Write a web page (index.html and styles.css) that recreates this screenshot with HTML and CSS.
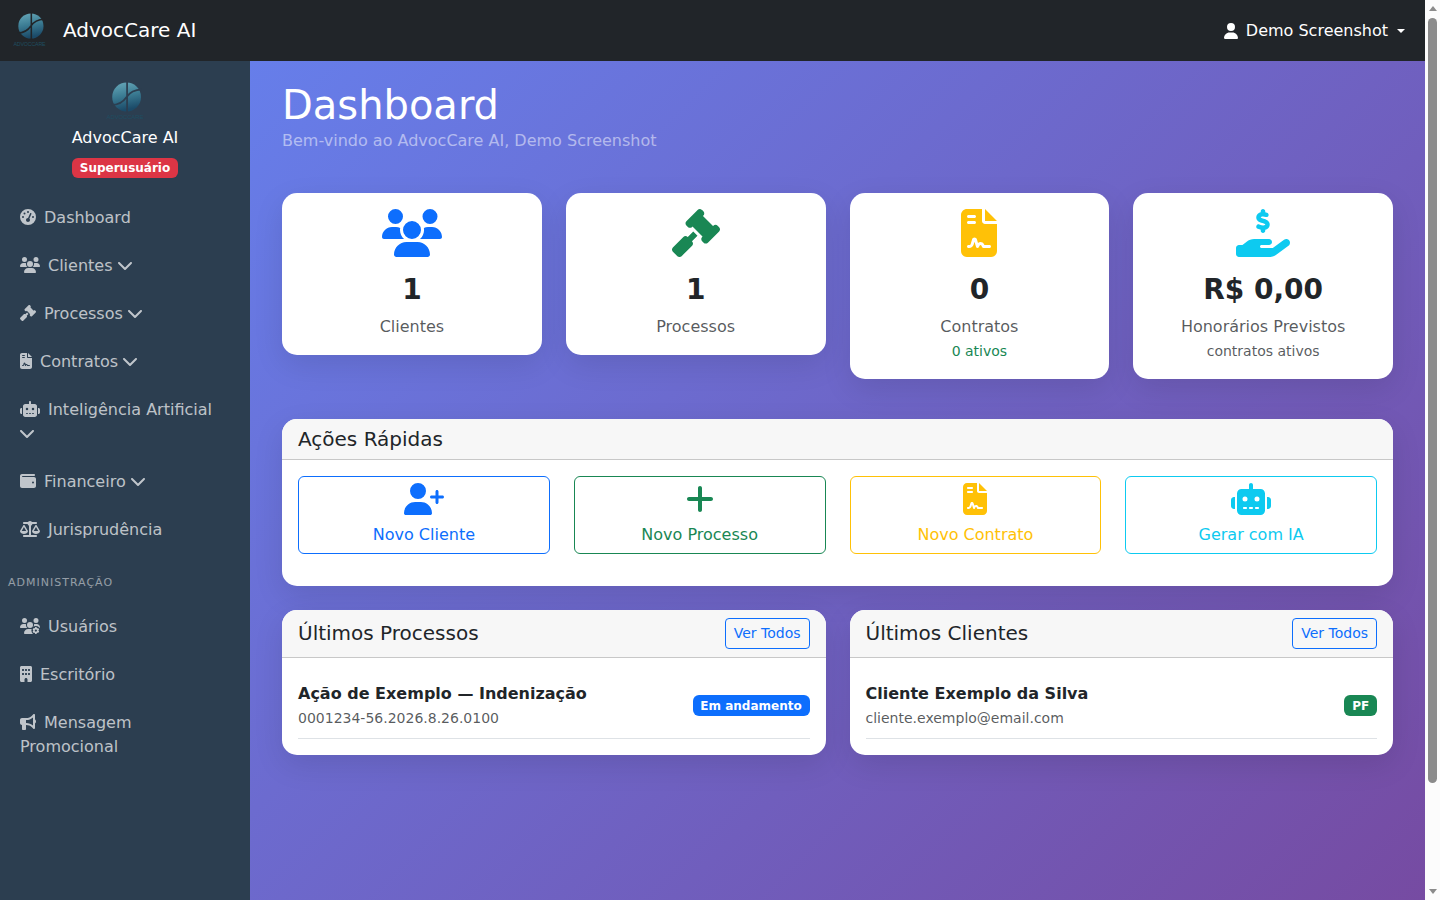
FILE: index.html
```html
<!DOCTYPE html>
<html lang="pt-BR">
<head>
  <meta charset="UTF-8">
  <meta name="viewport" content="width=device-width, initial-scale=1.0">
  <title>Dashboard - AdvocCare AI</title>
  <link rel="stylesheet" href="styles.css">
</head>
<body>
  <!-- Ícones -->
  <svg class="sprite" width="0" height="0" aria-hidden="true">
    <defs>
      <linearGradient id="logo-fill" x1="0" y1="0" x2="0.2" y2="1">
        <stop offset="0" stop-color="#68a9ba"/>
        <stop offset="0.5" stop-color="#3c7d94"/>
        <stop offset="1" stop-color="#1b4a68"/>
      </linearGradient>
      <g id="logo">
        <circle cx="27" cy="20" r="18" fill="url(#logo-fill)"/>
        <path class="logo-cut" d="M27.6 1V39M8 30C18 30 23 26 27 20C31 14 36 11 46 10.500"/>
        <text x="25" y="48" text-anchor="middle" textLength="46" class="logo-text">ADVOCCARE</text>
      </g>
      <path id="i-users" d="M144 0a80 80 0 1 1 0 160A80 80 0 1 1 144 0zM512 0a80 80 0 1 1 0 160A80 80 0 1 1 512 0zM0 298.700C0 239.800 47.800 192 106.700 192h42.700c15.900 0 31 3.500 44.600 9.700c-1.300 7.200-1.900 14.700-1.900 22.300c0 38.200 16.800 72.500 43.300 96H21.300C9.600 320 0 310.400 0 298.700zM405.300 320c26.600-23.500 43.300-57.800 43.300-96c0-7.600-.7-15-1.900-22.300c13.600-6.300 28.700-9.700 44.600-9.700h42.700C592.200 192 640 239.800 640 298.700c0 11.800-9.600 21.300-21.300 21.300H405.300zM224 224a96 96 0 1 1 192 0 96 96 0 1 1 -192 0zM128 485.300C128 411.700 187.700 352 261.300 352H378.700C452.300 352 512 411.700 512 485.300c0 14.700-11.900 26.700-26.700 26.700H154.700c-14.700 0-26.700-11.900-26.700-26.700z"/>
      <path id="i-gavel" d="M318.600 9.400c-12.500-12.500-32.800-12.500-45.300 0l-120 120c-12.500 12.500-12.500 32.800 0 45.300l16 16c12.500 12.500 32.800 12.500 45.300 0l4-4L325.400 293.400l-4 4c-12.500 12.500-12.500 32.800 0 45.300l16 16c12.500 12.500 32.800 12.500 45.300 0l120-120c12.500-12.500 12.500-32.800 0-45.300l-16-16c-12.500-12.500-32.800-12.500-45.300 0l-4 4L330.600 74.600l4-4c12.500-12.500 12.500-32.800 0-45.300l-16-16zm-152 288c-12.500-12.500-32.800-12.500-45.300 0l-112 112c-12.500 12.500-12.500 32.800 0 45.300l48 48c12.500 12.500 32.800 12.500 45.300 0l112-112c12.500-12.500 12.500-32.800 0-45.300l-1.400-1.400L272 285.300 226.700 240 168 298.700l-1.400-1.400z"/>
      <path id="i-contract" d="M64 0C28.700 0 0 28.700 0 64V448c0 35.300 28.700 64 64 64H320c35.300 0 64-28.700 64-64V160H256c-17.700 0-32-14.300-32-32V0H64zM256 0V128H384L256 0zM80 64h64c8.800 0 16 7.200 16 16s-7.200 16-16 16H80c-8.800 0-16-7.200-16-16s7.200-16 16-16zm0 64h64c8.800 0 16 7.200 16 16s-7.200 16-16 16H80c-8.800 0-16-7.200-16-16s7.200-16 16-16zm54.200 253.800c-6.100 20.300-24.800 34.200-46 34.200H80c-8.800 0-16-7.200-16-16s7.200-16 16-16h8.200c7.100 0 13.300-4.600 15.300-11.400l14.900-49.500c3.400-11.300 13.800-19.100 25.600-19.100s22.200 7.700 25.600 19.100l11.600 38.600c7.400-6.200 16.800-9.700 26.800-9.700c15.900 0 30.400 9 37.500 23.200l4.400 8.800H304c8.800 0 16 7.200 16 16s-7.200 16-16 16H240c-6.100 0-11.600-3.400-14.300-8.800l-8.800-17.700c-1.700-3.400-5.100-5.500-8.800-5.500s-7.200 2.100-8.800 5.500l-8.800 17.700c-2.900 5.900-9.200 9.400-15.700 8.800s-12.100-5.100-13.900-11.300L144 349l-9.800 32.800z"/>
      <path id="i-hand" d="M312 24V34.500c6.400 1.200 12.600 2.700 18.200 4.200c12.800 3.400 20.400 16.600 17 29.400s-16.600 20.400-29.400 17c-10.900-2.900-21.100-4.900-30.200-5c-7.300-.1-14.700 1.700-19.400 4.400c-2.100 1.300-3.100 2.400-3.500 3c-.3 .5-.7 1.200-.7 2.800c0 .3 0 .5 0 .6c.2 .2 .9 1.200 3.300 2.600c5.800 3.500 14.400 6.200 27.400 10.100l.9 .3c11.100 3.300 25.900 7.800 37.900 15.300c13.700 8.600 26.100 22.900 26.400 44.900c.3 22.500-11.400 38.900-26.700 48.500c-6.700 4.100-13.900 7-21.300 8.800V232c0 13.300-10.700 24-24 24s-24-10.700-24-24V220.600c-9.500-2.300-18.200-5.300-25.600-7.800c-2.100-.7-4.100-1.400-6-2c-12.600-4.200-19.400-17.800-15.200-30.400s17.800-19.400 30.400-15.200c2.600 .9 5 1.700 7.300 2.500c13.600 4.600 23.400 7.900 33.900 8.300c8 .3 15.100-1.600 19.200-4.100c1.900-1.200 2.800-2.200 3.200-2.900c.4-.6 .9-1.800 .8-4.100l0-.2c0-1 0-2.100-4-4.600c-5.700-3.600-14.300-6.400-27.100-10.300l-1.900-.6c-10.800-3.200-25-7.500-36.400-14.400c-13.500-8.100-26.500-22-26.600-44.100c-.1-22.900 12.900-38.600 27.700-47.400c6.400-3.800 13.300-6.400 20.200-8.200V24c0-13.300 10.700-24 24-24s24 10.700 24 24zM568.200 336.300c13.100 17.800 9.300 42.800-8.500 55.900L433.100 485.500c-23.400 17.200-51.600 26.500-80.700 26.500H192 32c-17.700 0-32-14.300-32-32V416c0-17.700 14.300-32 32-32H68.800l44.900-36c22.700-18.200 50.900-28 80-28H272h16 64c17.700 0 32 14.300 32 32s-14.300 32-32 32H288 272c-8.800 0-16 7.200-16 16s7.200 16 16 16H392.600l119.700-88.200c17.800-13.100 42.800-9.300 55.900 8.500z"/>
      <path id="i-user-plus" d="M96 128a128 128 0 1 1 256 0A128 128 0 1 1 96 128zM0 482.300C0 383.800 79.800 304 178.300 304h91.400C368.200 304 448 383.800 448 482.300c0 16.400-13.300 29.700-29.700 29.700H29.700C13.300 512 0 498.700 0 482.300zM504 312V248H440c-13.300 0-24-10.700-24-24s10.700-24 24-24h64V136c0-13.300 10.700-24 24-24s24 10.700 24 24v64h64c13.300 0 24 10.700 24 24s-10.700 24-24 24H552v64c0 13.300-10.700 24-24 24s-24-10.700-24-24z"/>
      <path id="i-plus" d="M256 80c0-17.700-14.300-32-32-32s-32 14.300-32 32V224H48c-17.700 0-32 14.300-32 32s14.300 32 32 32H192V432c0 17.700 14.300 32 32 32s32-14.300 32-32V288H400c17.700 0 32-14.300 32-32s-14.300-32-32-32H256V80z"/>
      <path id="i-robot" d="M320 0c17.700 0 32 14.300 32 32V96H472c39.800 0 72 32.200 72 72V440c0 39.800-32.200 72-72 72H168c-39.800 0-72-32.200-72-72V168c0-39.800 32.200-72 72-72H288V32c0-17.700 14.300-32 32-32zM208 384c-8.800 0-16 7.200-16 16s7.200 16 16 16h32c8.800 0 16-7.200 16-16s-7.200-16-16-16H208zm96 0c-8.800 0-16 7.200-16 16s7.200 16 16 16h32c8.800 0 16-7.200 16-16s-7.200-16-16-16H304zm96 0c-8.800 0-16 7.200-16 16s7.200 16 16 16h32c8.800 0 16-7.200 16-16s-7.200-16-16-16H400zM264 256a40 40 0 1 0 -80 0 40 40 0 1 0 80 0zm152 40a40 40 0 1 0 0-80 40 40 0 1 0 0 80zM48 224H64V416H48c-26.500 0-48-21.500-48-48V272c0-26.500 21.500-48 48-48zm544 0c26.500 0 48 21.500 48 48v96c0 26.500-21.500 48-48 48H576V224h16z"/>
      <path id="i-user" d="M224 256A128 128 0 1 0 224 0a128 128 0 1 0 0 256zm-45.700 48C79.800 304 0 383.800 0 482.300C0 498.700 13.300 512 29.700 512H418.300c16.400 0 29.700-13.300 29.700-29.700C448 383.800 368.200 304 269.700 304H178.300z"/>
      <path id="i-gauge" d="M0 256a256 256 0 1 1 512 0A256 256 0 1 1 0 256zM288 96a32 32 0 1 0 -64 0 32 32 0 1 0 64 0zM256 416c35.300 0 64-28.700 64-64c0-17.400-6.900-33.100-18.100-44.600L366 161.700c5.300-12.100-.2-26.300-12.300-31.600s-26.300 .2-31.600 12.300L257.900 288c-.6 0-1.300 0-1.900 0c-35.300 0-64 28.700-64 64s28.700 64 64 64zM176 144a32 32 0 1 0 -64 0 32 32 0 1 0 64 0zM96 288a32 32 0 1 0 0-64 32 32 0 1 0 0 64zm352-32a32 32 0 1 0 -64 0 32 32 0 1 0 64 0z"/>
      <path id="i-wallet" d="M64 32C28.700 32 0 60.700 0 96V416c0 35.300 28.700 64 64 64H448c35.300 0 64-28.700 64-64V192c0-35.300-28.700-64-64-64H80c-8.800 0-16-7.200-16-16s7.200-16 16-16H448c17.700 0 32-14.300 32-32s-14.300-32-32-32H64zM416 272a32 32 0 1 1 0 64 32 32 0 1 1 0-64z"/>
      <path id="i-scale" d="M384 32H512c17.700 0 32 14.300 32 32s-14.300 32-32 32H398.400c-5.200 25.800-22.900 47.100-46.400 57.300V448H512c17.700 0 32 14.300 32 32s-14.300 32-32 32H320 128c-17.700 0-32-14.300-32-32s14.300-32 32-32H288V153.300c-23.500-10.300-41.200-31.600-46.400-57.300H128c-17.700 0-32-14.300-32-32s14.300-32 32-32H256c14.600-19.400 37.800-32 64-32s49.400 12.600 64 32zm55.600 288H584.400L512 195.800 439.600 320zM512 416c-62.900 0-115.200-34-126-78.900c-2.600-11 1-22.300 6.700-32.100l95.200-163.200c5-8.600 14.200-13.800 24.100-13.800s19.100 5.300 24.100 13.800l95.200 163.200c5.700 9.800 9.300 21.100 6.700 32.100C627.200 382 574.900 416 512 416zM126.800 195.800L54.400 320H199.300L126.800 195.800zM.9 337.100c-2.600-11 1-22.300 6.700-32.100l95.200-163.200c5-8.600 14.200-13.800 24.100-13.800s19.100 5.300 24.100 13.800l95.200 163.200c5.700 9.800 9.300 21.100 6.700 32.100C242 382 189.700 416 126.800 416S11.700 382 .9 337.100z"/>
      <path id="i-building" d="M48 0C21.500 0 0 21.500 0 48V464c0 26.500 21.500 48 48 48h96V432c0-26.500 21.500-48 48-48s48 21.500 48 48v80h96c26.500 0 48-21.500 48-48V48c0-26.500-21.500-48-48-48H48zM64 240c0-8.800 7.200-16 16-16h32c8.800 0 16 7.200 16 16v32c0 8.800-7.200 16-16 16H80c-8.800 0-16-7.200-16-16V240zm112-16h32c8.800 0 16 7.200 16 16v32c0 8.800-7.200 16-16 16H176c-8.800 0-16-7.200-16-16V240c0-8.800 7.200-16 16-16zm80 16c0-8.800 7.200-16 16-16h32c8.800 0 16 7.200 16 16v32c0 8.800-7.200 16-16 16H272c-8.800 0-16-7.200-16-16V240zM80 96h32c8.800 0 16 7.200 16 16v32c0 8.800-7.200 16-16 16H80c-8.800 0-16-7.200-16-16V112c0-8.800 7.200-16 16-16zm80 16c0-8.800 7.200-16 16-16h32c8.800 0 16 7.200 16 16v32c0 8.800-7.200 16-16 16H176c-8.800 0-16-7.200-16-16V112zM272 96h32c8.800 0 16 7.200 16 16v32c0 8.800-7.200 16-16 16H272c-8.800 0-16-7.200-16-16V112c0-8.800 7.200-16 16-16z"/>
      <path id="i-bullhorn" d="M480 32c0-12.900-7.800-24.600-19.800-29.600s-25.700-2.200-34.900 6.900L381.700 53c-48 48-113.100 75-181 75H192 160 64c-35.300 0-64 28.700-64 64v96c0 35.300 28.700 64 64 64l0 128c0 17.700 14.300 32 32 32h64c17.700 0 32-14.300 32-32V352l8.700 0c67.900 0 133 27 181 75l43.600 43.600c9.200 9.200 22.900 11.900 34.900 6.900s19.800-16.600 19.800-29.600V300.400c18.600-8.800 32-32.500 32-60.400s-13.400-51.600-32-60.400V32zm-64 76.700V240 371.300C357.200 317.800 280.500 288 200.700 288H192V192h8.700c79.800 0 156.500-29.800 215.300-83.300z"/>
      <path id="i-chevron" d="M201.400 406.600c12.500 12.500 32.800 12.500 45.300 0l192-192c12.500-12.500 12.500-32.800 0-45.300s-32.800-12.500-45.300 0L224 338.700 54.600 169.400c-12.500-12.500-32.800-12.500-45.300 0s-12.500 32.800 0 45.300l192 192z"/>
      <g id="i-users-gear">
        <use href="#i-users"/>
        <circle cx="508" cy="400" r="142" class="gear-gap"/>
        <circle cx="508" cy="400" r="62" class="gear-ring"/>
        <path class="gear-teeth" d="M508 290V325M508 475V510M413 345L443 362M573 438L603 455M413 455L443 438M573 362L603 345"/>
      </g>
    </defs>
  </svg>

  <div class="page">
    <nav class="navbar">
      <a class="navbar-brand" href="#">
        <svg class="logo" viewBox="0 0 50 50"><use href="#logo"/></svg>
        AdvocCare AI
      </a>
      <a class="user-menu" href="#"><svg class="icon" viewBox="0 0 448 512"><use href="#i-user"/></svg>Demo Screenshot</a>
    </nav>

    <div class="layout">
      <aside class="sidebar">
        <div class="sidebar-header">
          <svg class="logo" viewBox="0 0 50 50"><use href="#logo"/></svg>
          <div class="office">AdvocCare AI</div>
          <span class="badge bg-danger">Superusuário</span>
        </div>
        <nav class="menu">
          <a href="#"><svg class="icon" viewBox="0 0 512 512"><use href="#i-gauge"/></svg>Dashboard</a>
          <a href="#"><svg class="icon" viewBox="0 0 640 512"><use href="#i-users"/></svg>Clientes <svg class="chevron" viewBox="0 0 448 512"><use href="#i-chevron"/></svg></a>
          <a href="#"><svg class="icon" viewBox="0 0 512 512"><use href="#i-gavel"/></svg>Processos <svg class="chevron" viewBox="0 0 448 512"><use href="#i-chevron"/></svg></a>
          <a href="#"><svg class="icon" viewBox="0 0 384 512"><use href="#i-contract"/></svg>Contratos <svg class="chevron" viewBox="0 0 448 512"><use href="#i-chevron"/></svg></a>
          <a href="#"><svg class="icon" viewBox="0 0 640 512"><use href="#i-robot"/></svg>Inteligência Artificial <svg class="chevron" viewBox="0 0 448 512"><use href="#i-chevron"/></svg></a>
          <a href="#"><svg class="icon" viewBox="0 0 512 512"><use href="#i-wallet"/></svg>Financeiro <svg class="chevron" viewBox="0 0 448 512"><use href="#i-chevron"/></svg></a>
          <a href="#"><svg class="icon" viewBox="0 0 640 512"><use href="#i-scale"/></svg>Jurisprudência</a>
          <div class="menu-title">Administração</div>
          <a href="#"><svg class="icon" viewBox="0 0 640 512"><use href="#i-users-gear"/></svg>Usuários</a>
          <a href="#"><svg class="icon" viewBox="0 0 384 512"><use href="#i-building"/></svg>Escritório</a>
          <a href="#"><svg class="icon" viewBox="0 0 512 512"><use href="#i-bullhorn"/></svg>Mensagem Promocional</a>
        </nav>
      </aside>

      <main class="content">
        <h1>Dashboard</h1>
        <p class="welcome">Bem-vindo ao AdvocCare AI, Demo Screenshot</p>

        <!-- Estatísticas -->
        <div class="stats">
          <div class="card stat">
            <svg class="stat-icon primary" viewBox="0 0 640 512"><use href="#i-users"/></svg>
            <h3>1</h3>
            <p>Clientes</p>
          </div>
          <div class="card stat">
            <svg class="stat-icon success" viewBox="0 0 512 512"><use href="#i-gavel"/></svg>
            <h3>1</h3>
            <p>Processos</p>
          </div>
          <div class="card stat">
            <svg class="stat-icon warning" viewBox="0 0 384 512"><use href="#i-contract"/></svg>
            <h3>0</h3>
            <p>Contratos</p>
            <small class="success">0 ativos</small>
          </div>
          <div class="card stat">
            <svg class="stat-icon info" viewBox="0 0 576 512"><use href="#i-hand"/></svg>
            <h3>R$ 0,00</h3>
            <p>Honorários Previstos</p>
            <small>contratos ativos</small>
          </div>
        </div>

        <!-- Ações rápidas -->
        <div class="card quick">
          <div class="card-header"><h5>Ações Rápidas</h5></div>
          <div class="actions">
            <a class="action primary" href="#"><svg viewBox="0 0 640 512"><use href="#i-user-plus"/></svg>Novo Cliente</a>
            <a class="action success" href="#"><svg viewBox="0 0 448 512"><use href="#i-plus"/></svg>Novo Processo</a>
            <a class="action warning" href="#"><svg viewBox="0 0 384 512"><use href="#i-contract"/></svg>Novo Contrato</a>
            <a class="action info" href="#"><svg viewBox="0 0 640 512"><use href="#i-robot"/></svg>Gerar com IA</a>
          </div>
        </div>

        <div class="latest">
          <div class="card">
            <div class="card-header"><h5>Últimos Processos</h5><a class="btn-sm" href="#">Ver Todos</a></div>
            <div class="card-body">
              <div class="item">
                <div>
                  <strong>Ação de Exemplo — Indenização</strong>
                  <small>0001234-56.2026.8.26.0100</small>
                </div>
                <span class="badge bg-primary">Em andamento</span>
              </div>
            </div>
          </div>
          <div class="card">
            <div class="card-header"><h5>Últimos Clientes</h5><a class="btn-sm" href="#">Ver Todos</a></div>
            <div class="card-body">
              <div class="item">
                <div>
                  <strong>Cliente Exemplo da Silva</strong>
                  <small>cliente.exemplo@email.com</small>
                </div>
                <span class="badge bg-success">PF</span>
              </div>
            </div>
          </div>
        </div>
      </main>
    </div>
  </div>

  <div class="scrollbar">
    <span class="arrow up"></span>
    <span class="thumb"></span>
    <span class="arrow down"></span>
  </div>
</body>
</html>
```
FILE: styles.css
```css
* {
  box-sizing: border-box;
}

body {
  margin: 0;
  height: 100vh;
  display: flex;
  overflow: hidden;
  font-family: "DejaVu Sans", sans-serif;
  font-size: 16px;
  line-height: 1.5;
  color: #212529;
}

a {
  color: inherit;
  text-decoration: none;
}

h1, h3, h5, p {
  margin: 0;
}

h1, h3, h5 {
  font-weight: 500;
  line-height: 1.2;
}

svg {
  fill: currentColor;
}

.sprite {
  position: absolute;
}

.primary { color: #0d6efd; }
.success { color: #198754; }
.warning { color: #ffc107; }
.info { color: #0dcaf0; }

.bg-primary { background: #0d6efd; }
.bg-success { background: #198754; }
.bg-danger { background: #dc3545; }

.page {
  flex: 1;
  display: flex;
  flex-direction: column;
}

/* Navbar */
.navbar {
  --logo-bg: #212529;
  height: 61px;
  flex-shrink: 0;
  display: flex;
  justify-content: space-between;
  align-items: center;
  padding: 0 20px 0 12px;
  background: #212529;
  color: #fff;
}

.navbar-brand {
  display: flex;
  align-items: center;
  font-size: 20px;
  line-height: 30px;
  padding-bottom: 2px;
}

.navbar-brand .logo {
  width: 35px;
  height: 35px;
  margin-right: 16px;
}

.logo-cut {
  fill: none;
  stroke: var(--logo-bg);
  stroke-width: 2.2;
}

.logo-text {
  font-family: "Liberation Sans", sans-serif;
  font-size: 7.5px;
  fill: #1f4d60;
}

.user-menu {
  display: flex;
  align-items: center;
}

.user-menu::after {
  content: "";
  margin-left: 9px;
  border-top: 4.8px solid;
  border-left: 4.8px solid transparent;
  border-right: 4.8px solid transparent;
}

.icon {
  height: 1em;
  margin-right: 8px;
  vertical-align: -0.125em;
}

.chevron {
  height: 1em;
  vertical-align: -0.125em;
}

/* Sidebar */
.layout {
  flex: 1;
  display: flex;
}

.sidebar {
  --logo-bg: #2c3e50;
  width: 250px;
  flex-shrink: 0;
  background: #2c3e50;
}

.sidebar-header {
  display: flex;
  flex-direction: column;
  align-items: center;
  padding: 20px 0 16px;
  color: #fff;
}

.sidebar-header .logo {
  width: 40px;
  height: 40px;
}

.office {
  margin: 5px 0 8px;
}

.badge {
  padding: 4.2px 7.8px;
  border-radius: 6px;
  font-size: 12px;
  font-weight: 700;
  line-height: 1;
  color: #fff;
}

.menu a {
  display: block;
  padding: 12px 20px;
  color: rgba(255, 255, 255, 0.7);
}

.menu-title {
  padding: 20px 8px 12px;
  font-size: 11px;
  line-height: 17px;
  letter-spacing: 1px;
  text-transform: uppercase;
  color: rgba(255, 255, 255, 0.5);
}

.gear-gap {
  fill: #2c3e50;
}

.gear-ring {
  fill: none;
  stroke: currentColor;
  stroke-width: 52;
}

.gear-teeth {
  stroke: currentColor;
  stroke-width: 48;
}

/* Content */
.content {
  flex: 1;
  padding: 20px 32px;
  background: linear-gradient(135deg, #667eea 0%, #764ba2 100%);
}

h1 {
  font-size: 40px;
  color: #fff;
}

.welcome {
  margin-bottom: 40px;
  color: rgba(255, 255, 255, 0.5);
}

.card {
  background: #fff;
  border-radius: 15px;
  box-shadow: 0 10px 30px rgba(0, 0, 0, 0.1);
  overflow: hidden;
}

.stats {
  display: grid;
  grid-template-columns: repeat(4, 1fr);
  gap: 24px;
  align-items: start;
  margin-bottom: 40px;
}

.stat {
  padding: 16px;
  text-align: center;
}

.stat-icon {
  display: block;
  height: 48px;
  margin: 0 auto 16px;
}

.stat h3 {
  margin-bottom: 8px;
  font-size: 28px;
  font-weight: 700;
}

.stat p,
.stat small:not(.success),
.item small {
  color: rgba(33, 37, 41, 0.75);
}

.stat small {
  display: block;
  font-size: 14px;
  line-height: 24px;
}

.card-header {
  display: flex;
  justify-content: space-between;
  align-items: center;
  padding: 8px 16px;
  background: #f7f7f7;
  border-bottom: 1px solid #c8c8c8;
}

h5 {
  font-size: 20px;
}

.quick {
  margin-bottom: 24px;
}

.actions {
  display: grid;
  grid-template-columns: repeat(4, 1fr);
  gap: 24px;
  padding: 16px 16px 32px;
}

.action {
  padding: 6px 12px;
  border: 1px solid;
  border-radius: 6px;
  text-align: center;
}

.action svg {
  display: block;
  height: 32px;
  margin: 0 auto 8px;
}

.latest {
  display: grid;
  grid-template-columns: repeat(2, 1fr);
  gap: 24px;
}

.btn-sm {
  padding: 4px 8px;
  border: 1px solid #0d6efd;
  border-radius: 4px;
  font-size: 14px;
  line-height: 21px;
  color: #0d6efd;
}

.card-body {
  padding: 16px;
}

.item {
  display: flex;
  justify-content: space-between;
  align-items: center;
  padding: 8px 0;
  border-bottom: 1px solid #dee2e6;
}

.item strong,
.item small {
  display: block;
}

.item small {
  font-size: 14px;
  line-height: 24px;
}

/* Scrollbar */
.scrollbar {
  width: 15px;
  display: flex;
  flex-direction: column;
  align-items: center;
  padding: 6px 0;
  background: #fcfcfc;
}

.arrow {
  border-left: 4.5px solid transparent;
  border-right: 4.5px solid transparent;
}

.up {
  border-bottom: 5px solid #8b8b8b;
}

.down {
  margin-top: auto;
  border-top: 5px solid #8b8b8b;
}

.thumb {
  width: 9px;
  height: 765px;
  margin-top: 7px;
  border-radius: 5px;
  background: #8b8b8b;
}
```
